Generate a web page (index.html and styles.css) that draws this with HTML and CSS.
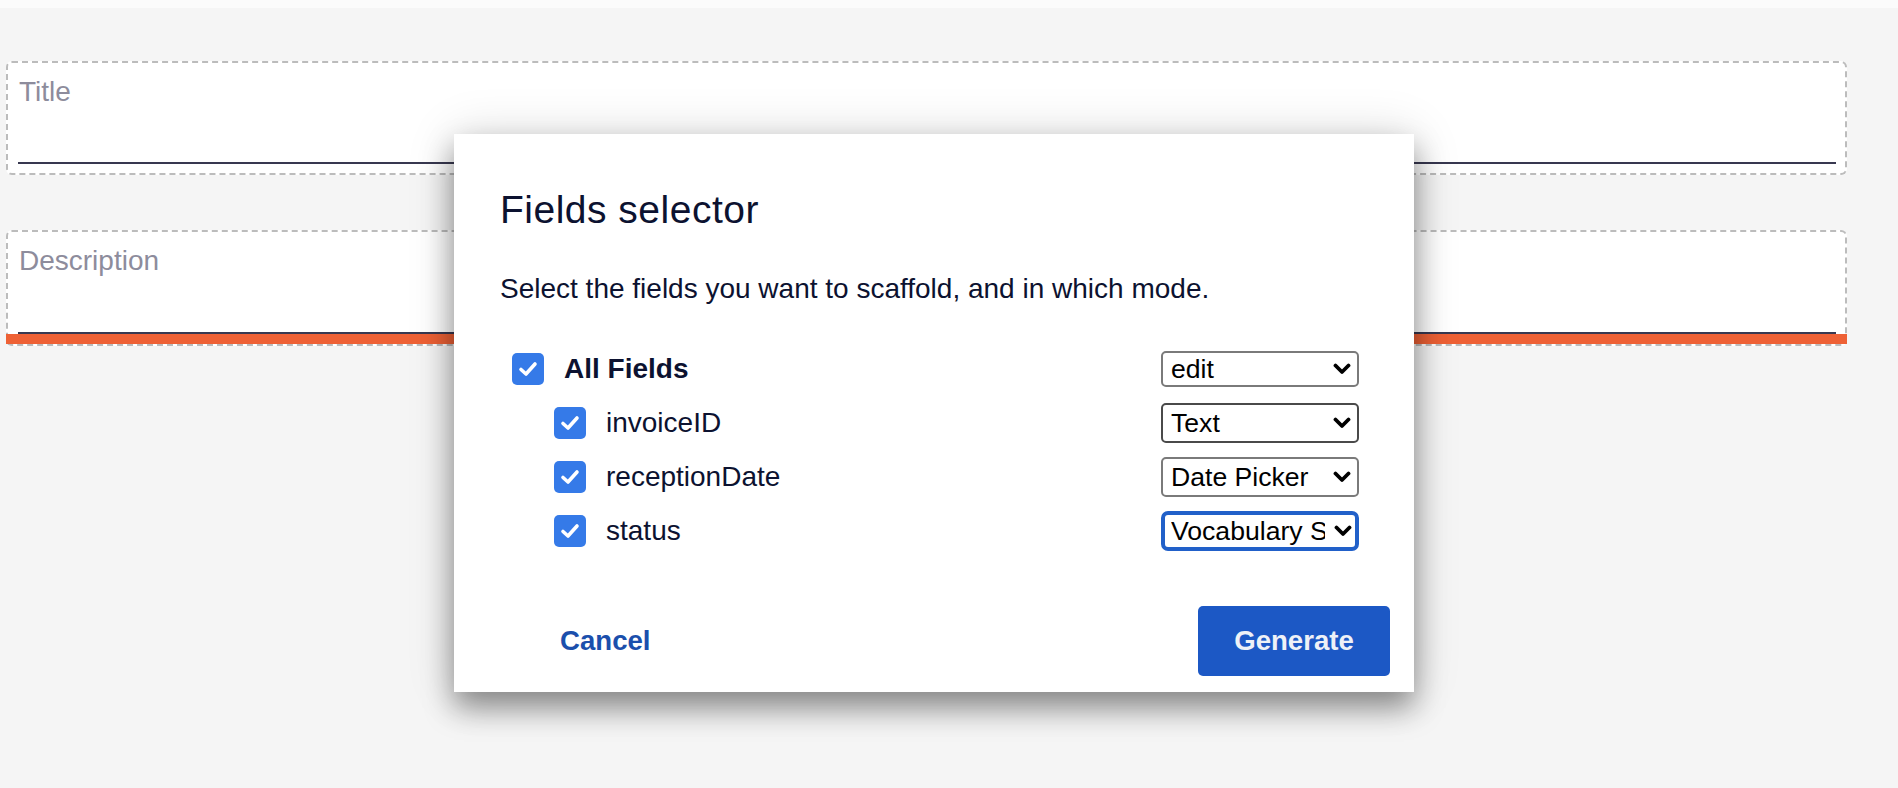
FILE: index.html
```html
<!DOCTYPE html>
<html lang="en">
<head>
<meta charset="utf-8">
<title>Fields selector</title>
<link rel="stylesheet" href="styles.css">
</head>
<body>
<div class="topbar"></div>
<main class="form">
  <div class="field">
    <label class="field-label">Title</label>
    <div class="field-input"></div>
  </div>
  <div class="field field-error">
    <label class="field-label">Description</label>
    <div class="field-input"></div>
    <div class="error-bar"></div>
  </div>
</main>

<div class="dialog" role="dialog">
  <div class="dialog-body">
    <h2 class="dialog-title">Fields selector</h2>
    <p class="dialog-text">Select the fields you want to scaffold, and in which mode.</p>
    <div class="fields">
      <div class="row row-all">
        <div class="check-label">
          <span class="checkbox"><svg width="32" height="32" viewBox="0 0 32 32"><polyline points="9,16.5 14,21 23,11" fill="none" stroke="#fff" stroke-width="3.6" stroke-linecap="round" stroke-linejoin="round"/></svg></span>
          <span class="label-bold">All Fields</span>
        </div>
        <div class="select-wrap select-small">
          <select class="select"><option>edit</option></select>
          <svg class="chev" width="18" height="12" viewBox="0 0 18 12"><polyline points="2.5,2.5 9,9 15.5,2.5" fill="none" stroke="#000" stroke-width="3.8" stroke-linecap="round" stroke-linejoin="round"/></svg>
        </div>
      </div>
      <div class="row row-child">
        <div class="check-label">
          <span class="checkbox"><svg width="32" height="32" viewBox="0 0 32 32"><polyline points="9,16.5 14,21 23,11" fill="none" stroke="#fff" stroke-width="3.6" stroke-linecap="round" stroke-linejoin="round"/></svg></span>
          <span class="label">invoiceID</span>
        </div>
        <div class="select-wrap select-hover">
          <select class="select"><option>Text</option></select>
          <svg class="chev" width="18" height="12" viewBox="0 0 18 12"><polyline points="2.5,2.5 9,9 15.5,2.5" fill="none" stroke="#000" stroke-width="3.8" stroke-linecap="round" stroke-linejoin="round"/></svg>
        </div>
      </div>
      <div class="row row-child">
        <div class="check-label">
          <span class="checkbox"><svg width="32" height="32" viewBox="0 0 32 32"><polyline points="9,16.5 14,21 23,11" fill="none" stroke="#fff" stroke-width="3.6" stroke-linecap="round" stroke-linejoin="round"/></svg></span>
          <span class="label">receptionDate</span>
        </div>
        <div class="select-wrap">
          <select class="select"><option>Date Picker</option></select>
          <svg class="chev" width="18" height="12" viewBox="0 0 18 12"><polyline points="2.5,2.5 9,9 15.5,2.5" fill="none" stroke="#000" stroke-width="3.8" stroke-linecap="round" stroke-linejoin="round"/></svg>
        </div>
      </div>
      <div class="row row-child">
        <div class="check-label">
          <span class="checkbox"><svg width="32" height="32" viewBox="0 0 32 32"><polyline points="9,16.5 14,21 23,11" fill="none" stroke="#fff" stroke-width="3.6" stroke-linecap="round" stroke-linejoin="round"/></svg></span>
          <span class="label">status</span>
        </div>
        <div class="select-wrap select-focus">
          <select class="select"><option>Vocabulary Select</option></select>
          <svg class="chev" width="18" height="12" viewBox="0 0 18 12"><polyline points="2.5,2.5 9,9 15.5,2.5" fill="none" stroke="#000" stroke-width="3.8" stroke-linecap="round" stroke-linejoin="round"/></svg>
        </div>
      </div>
    </div>
  </div>
  <div class="dialog-footer">
    <button class="btn-cancel">Cancel</button>
    <button class="btn-primary">Generate</button>
  </div>
</div>
</body>
</html>
```
FILE: styles.css
```css
* { box-sizing: border-box; }

html, body {
  margin: 0;
  padding: 0;
}

body {
  background: #f5f5f5;
  font-family: "Liberation Sans", Arial, Helvetica, sans-serif;
  color: #0e1330;
  width: 1898px;
  height: 788px;
  overflow: hidden;
  position: relative;
}

.topbar {
  height: 8px;
  background: #fbfbfb;
}

.form {
  padding: 53px 51px 0 6px;
  display: flex;
  flex-direction: column;
  gap: 55px;
}

.field {
  background: #fff;
  border: 2px dashed #bcbcbc;
  border-radius: 6px;
  padding: 13px 9px 9px 10px;
  display: flex;
  flex-direction: column;
}

.field-error {
  padding-bottom: 0;
}

.field-label {
  font-size: 28px;
  line-height: 32px;
  color: #8d8c9c;
  padding-left: 1px;
}

.field-input {
  height: 56px;
  border-bottom: 2px solid #383850;
}

.field-error .field-input {
  height: 57px;
}

.error-bar {
  height: 10px;
  background: #ee6135;
  margin: 0 -11px 0 -12px;
}

.dialog {
  position: absolute;
  left: 454px;
  top: 134px;
  width: 960px;
  height: 558px;
  background: #fff;
  box-shadow: 0 16px 28px rgba(0, 0, 0, 0.4), 0 0 46px rgba(0, 0, 0, 0.14);
  display: flex;
  flex-direction: column;
}

.dialog-body {
  padding: 53px 55px 0 46px;
}

.dialog-title {
  margin: 0;
  font-size: 39px;
  line-height: 46px;
  font-weight: normal;
  letter-spacing: 0.5px;
  color: #0c1230;
}

.dialog-text {
  margin: 40px 0 0 0;
  font-size: 28px;
  line-height: 32px;
  color: #0c1230;
}

.fields {
  margin-top: 46px;
  padding-left: 12px;
  display: flex;
  flex-direction: column;
  gap: 14px;
}

.row {
  display: flex;
  align-items: center;
  justify-content: space-between;
}

.row-all {
  height: 36px;
  margin-bottom: 2px;
}

.row-child {
  height: 40px;
  padding-left: 42px;
}

.check-label {
  display: flex;
  align-items: center;
  gap: 20px;
}

.checkbox {
  width: 32px;
  height: 32px;
  border-radius: 5px;
  background: #357ae8;
  display: flex;
}

.label, .label-bold {
  font-size: 28px;
  line-height: 32px;
  color: #0c1230;
}

.label-bold {
  font-weight: bold;
}

.select-wrap {
  position: relative;
  width: 198px;
  height: 40px;
}

.select-small {
  height: 36px;
}

.select {
  -webkit-appearance: none;
  appearance: none;
  width: 100%;
  height: 100%;
  margin: 0;
  border: 2px solid #7a7a7a;
  border-radius: 5px;
  background: #fff;
  font-family: "Liberation Sans", Arial, sans-serif;
  font-size: 26.6px;
  color: #000;
  padding: 0 34px 0 8px;
  white-space: nowrap;
  overflow: hidden;
  text-overflow: clip;
}

.select-hover .select {
  border-color: #4a4a4a;
}

.select-focus .select {
  border: 4px solid #2160c9;
  border-radius: 7px;
  padding-left: 6px;
  padding-right: 30px;
}

.chev {
  position: absolute;
  right: 8px;
  top: 50%;
  margin-top: -6px;
  pointer-events: none;
  background: #fff;
}

.select-focus .chev {
  right: 7px;
}

.dialog-footer {
  margin-top: 55px;
  padding: 0 24px 16px 82px;
  display: flex;
  align-items: center;
  justify-content: space-between;
}

.btn-cancel {
  background: none;
  border: none;
  padding: 0 24px;
  height: 70px;
  font-family: "Liberation Sans", Arial, sans-serif;
  font-size: 27.6px;
  font-weight: bold;
  color: #1b4fac;
}

.btn-primary {
  width: 192px;
  height: 70px;
  border: none;
  border-radius: 5px;
  background: #1c58c5;
  font-family: "Liberation Sans", Arial, sans-serif;
  font-size: 27.6px;
  font-weight: bold;
  color: #eef1f7;
}
```
